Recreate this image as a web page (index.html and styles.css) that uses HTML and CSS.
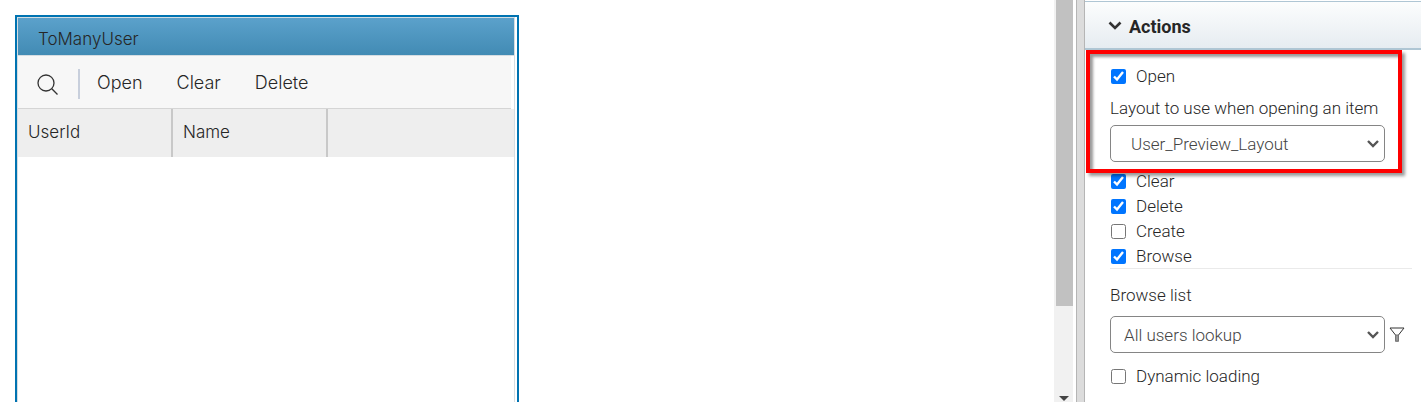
FILE: index.html
```html
<!DOCTYPE html>
<html lang="en">
<head>
<meta charset="utf-8">
<title>Layout designer</title>
<link rel="stylesheet" href="styles.css">
</head>
<body>
<div class="designer">
  <main class="canvas">
    <section class="widget">
      <div class="widget-body">
        <h2 class="widget-title">ToManyUser</h2>
        <div class="toolbar">
          <button class="search" type="button" aria-label="Search">
            <svg width="22" height="22" viewBox="0 0 22 22"><circle cx="9" cy="9" r="8"/><path d="M14.8 14.8L20.500 20.500"/></svg>
          </button>
          <button type="button">Open</button>
          <button type="button">Clear</button>
          <button type="button">Delete</button>
        </div>
        <table class="grid">
          <thead><tr><th class="col">UserId</th><th class="col">Name</th><th></th></tr></thead>
        </table>
      </div>
    </section>
  </main>
  <div class="scrollbar">
    <div class="thumb"></div>
    <svg class="arrow" width="10" height="6" viewBox="0 0 10 6"><path d="M0 0H10L5 5Z"/></svg>
  </div>
  <div class="splitter"></div>
  <aside class="panel">
    <h3 class="panel-title">
      <svg width="14" height="9" viewBox="0 0 14 9"><path d="M1.500 1.500L7 7L12.500 1.500"/></svg>
      Actions
    </h3>
    <div class="options">
      <div class="group">
        <label class="check"><input type="checkbox" checked>Open</label>
        <label class="caption" for="layout">Layout to use when opening an item</label>
        <div class="picker">
          <select id="layout" class="indent"><option>User_Preview_Layout</option></select>
          <svg class="chevron" width="12" height="8" viewBox="0 0 12 8"><path d="M1 1L6 6L11 1"/></svg>
        </div>
        <div class="highlight"></div>
      </div>
      <div class="list">
        <label class="check"><input type="checkbox" checked>Clear</label>
        <label class="check"><input type="checkbox" checked>Delete</label>
        <label class="check"><input type="checkbox">Create</label>
        <label class="check"><input type="checkbox" checked>Browse</label>
      </div>
      <label class="caption browse" for="browse">Browse list</label>
      <div class="picker">
        <select id="browse"><option>All users lookup</option></select>
        <svg class="chevron" width="12" height="8" viewBox="0 0 12 8"><path d="M1 1L6 6L11 1"/></svg>
        <button class="filter" type="button" aria-label="Filter">
          <svg width="16" height="15" viewBox="0 0 16 15"><path d="M1 1H15L9.500 8V14H6.500V8Z"/><rect x="6.500" y="8" width="3" height="6"/></svg>
        </button>
      </div>
      <label class="check dynamic"><input type="checkbox">Dynamic loading</label>
    </div>
  </aside>
</div>
</body>
</html>
```
FILE: styles.css
```css
* { box-sizing: border-box; }
body {
  margin: 0;
  font: 300 17px/24px Roboto, sans-serif;
  color: #262626;
  background: #fff;
}
button { border: 0; background: none; padding: 0; font: inherit; color: inherit; }
svg { display: block; fill: none; stroke: #333; }
.designer { display: flex; height: 100vh; overflow: hidden; }

.canvas { flex: 1; min-width: 0; display: flex; padding: 15px 15px 0; }
.widget {
  width: 504px;
  border: 2px solid #0073b1;
  border-bottom: 0;
  padding-right: 2px;
  font-family: Inter, sans-serif;
}
.widget-body { height: 100%; border: 1px solid #d5dde2; border-bottom: 0; }
.widget-title {
  margin: 0;
  padding: 4px 20px 0;
  height: 38px;
  font-size: 17px;
  font-weight: 300;
  line-height: 34px;
  border-bottom: 1px solid #d5dde2;
  background: linear-gradient(#5ba1cb, #428bb4);
}
.toolbar {
  display: flex;
  align-items: center;
  gap: 34px;
  height: 53px;
  margin-right: 3px;
  padding: 2px 0 0 19px;
  font-size: 18px;
  border-bottom: 1px solid #d5d5d5;
  background: #f7f7f7;
}
.search {
  display: flex;
  align-items: center;
  height: 30px;
  padding: 2px 19px 0 0;
  margin: 2px -17px 0 0;
  border-right: 2px solid #c8cfdc;
}
.search svg { stroke-width: 1.3; }
.grid { width: 100%; border-collapse: separate; border-spacing: 0; table-layout: fixed; }
.grid th {
  height: 48px;
  padding: 0 10px 2px;
  text-align: left;
  font-weight: 300;
  background: #eee;
}
.grid .col { width: 155px; border-right: 2px solid #c8c8c8; }

.scrollbar {
  width: 19px;
  display: flex;
  flex-direction: column;
  align-items: flex-end;
  justify-content: space-between;
  background: #f1f1f1;
}
.thumb { width: 17px; height: 76%; background: #c1c1c1; }
.arrow { margin-right: 4px; fill: #444; stroke: none; }
.splitter {
  width: 9px;
  margin-left: 3px;
  border: solid #b5b5b5;
  border-width: 0 1px;
  background: #dcdcdc;
}

.panel { width: 336px; padding-top: 1px; }
.panel-title {
  display: flex;
  align-items: center;
  gap: 7px;
  height: 49px;
  margin: 0;
  padding: 3px 0 0 23px;
  border-top: 1px solid #afc6d4;
  border-bottom: 2px solid #afc6d4;
  background: linear-gradient(#fcfdfd, #e6ecf1);
  font-size: 18px;
  font-weight: 700;
}
.panel-title svg { margin-bottom: 2px; stroke-width: 2.6; }
.options { padding: 13px 9px 0 25px; }
.group { position: relative; }
.highlight {
  position: absolute;
  inset: -13px 10px -11px -24px;
  border: 4px solid #f00;
  box-shadow: 3px 3px 3px #0006, inset 3px 3px 3px #0006;
  pointer-events: none;
}
.check { display: flex; align-items: center; gap: 10px; height: 25px; }
.check input { width: 15px; height: 15px; margin: 1px 0 0 1px; }
.caption { display: block; margin: 8px 0 5px; }
.picker { position: relative; display: flex; align-items: center; }
.picker select {
  appearance: none;
  flex: none;
  width: 275px;
  height: 37px;
  padding: 1px 30px 0 13px;
  border: 1px solid #858585;
  border-radius: 5px;
  background: #fff;
  font: inherit;
  color: #444;
}
.picker select.indent { padding-left: 20px; }
.chevron { position: absolute; left: 257px; top: 15px; stroke: #555; stroke-width: 2.4; pointer-events: none; }
.filter { margin-left: 4px; }
.filter rect { fill: #999; stroke: #777; }
.list { padding-top: 6px; border-bottom: 1px solid #eaeaea; }
.browse { margin: 14px 0 9px; }
.dynamic { margin-top: 10px; }
```
